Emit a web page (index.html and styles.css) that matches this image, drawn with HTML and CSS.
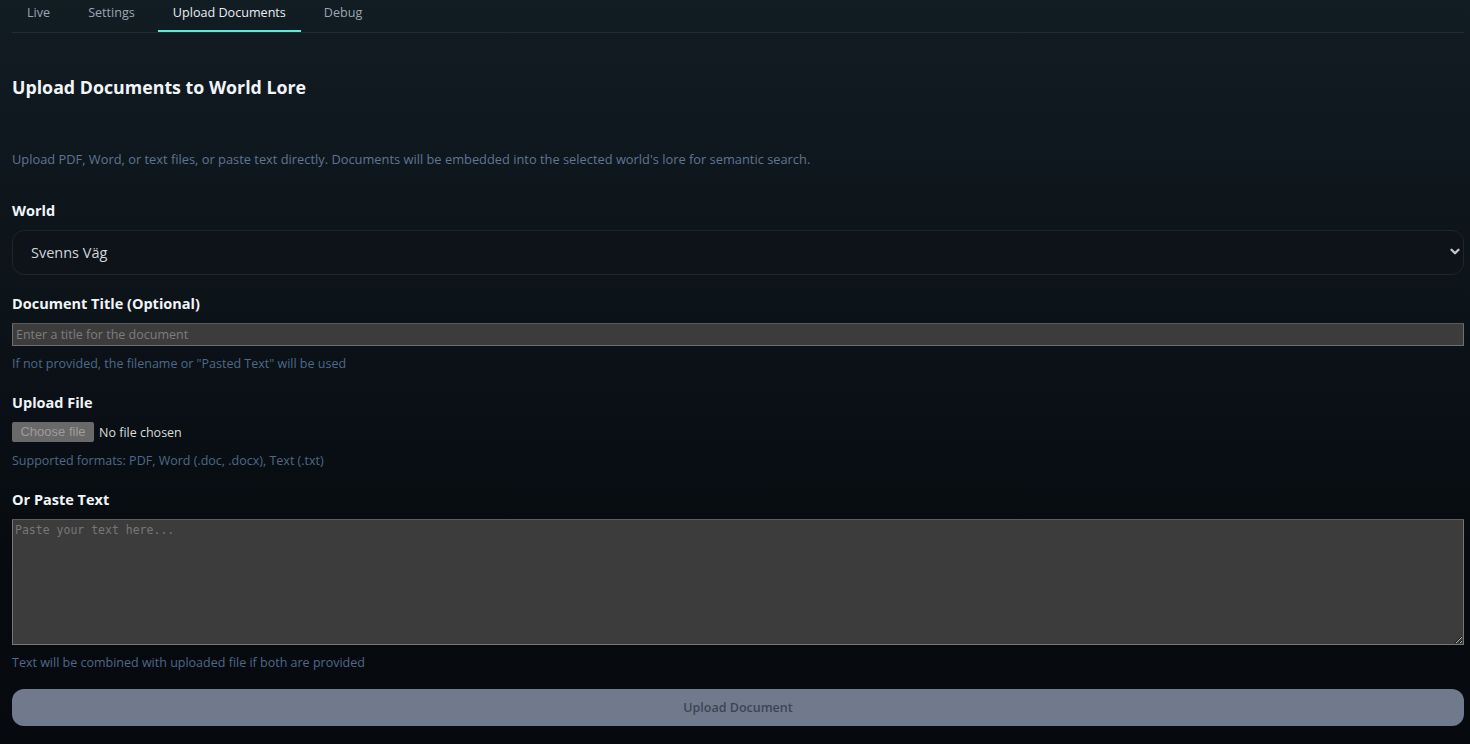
FILE: index.html
```html
<!DOCTYPE html>
<html lang="en">
<head>
<meta charset="utf-8">
<title>Upload Documents</title>
<link rel="stylesheet" href="styles.css">
</head>
<body>
<div class="page">
  <nav class="tabs">
    <span class="tab">Live</span>
    <span class="tab">Settings</span>
    <span class="tab active">Upload Documents</span>
    <span class="tab">Debug</span>
  </nav>

  <h2 class="title">Upload Documents to World Lore</h2>
  <p class="desc">Upload PDF, Word, or text files, or paste text directly. Documents will be embedded into the selected world's lore for semantic search.</p>

  <div class="group first">
    <label class="label">World</label>
    <div class="select-wrap">
      <select class="select"><option>Svenns Väg</option></select>
      <svg class="chev" width="10" height="8" viewBox="0 0 10 8"><path d="M1.5 1.8 L5 5.3 L8.5 1.8" fill="none" stroke="#c3c7cf" stroke-width="2.3" stroke-linecap="round" stroke-linejoin="round"/></svg>
    </div>
  </div>

  <div class="group second">
    <label class="label">Document Title (Optional)</label>
    <input class="text-input" type="text" placeholder="Enter a title for the document">
    <p class="hint">If not provided, the filename or "Pasted Text" will be used</p>
  </div>

  <div class="group">
    <label class="label">Upload File</label>
    <div class="file">
      <span class="file-btn">Choose file</span>
      <span class="file-name">No file chosen</span>
    </div>
    <p class="hint">Supported formats: PDF, Word (.doc, .docx), Text (.txt)</p>
  </div>

  <div class="group">
    <label class="label">Or Paste Text</label>
    <textarea class="textarea" placeholder="Paste your text here..."></textarea>
    <p class="hint">Text will be combined with uploaded file if both are provided</p>
  </div>

  <button class="submit" disabled>Upload Document</button>
</div>
</body>
</html>
```

FILE: styles.css
```css
html, body {
  margin: 0;
  padding: 0;
  height: 100%;
}
body {
  background: linear-gradient(180deg, #121c23 0%, #0c1319 40%, #070b10 75%, #060a0f 100%);
  font-family: "Open Sans", "Noto Sans", sans-serif;
  color: #e6edf3;
  overflow: hidden;
}
.page {
  padding: 0 6px 0 12px;
  display: flex;
  flex-direction: column;
}
.tabs {
  display: flex;
  gap: 8px;
  border-bottom: 1px solid #222c35;
  height: 33px;
  box-sizing: border-box;
}
.tab {
  font-size: 12.6px;
  line-height: 20px;
  padding: 3px 15px 7px;
  color: #9aa6b2;
  border-bottom: 2px solid transparent;
  height: 20px;
}
.tab.active {
  color: #e8eef4;
  border-bottom-color: #5eead4;
}
.title {
  margin: 42px 0 0;
  font-size: 17.8px;
  line-height: 24px;
  font-weight: 700;
  color: #f1f5f9;
}
.desc {
  margin: 51px 0 0;
  font-size: 12.85px;
  line-height: 18px;
  color: #5f7590;
}
.group {
  display: flex;
  flex-direction: column;
  margin-top: 19px;
}
.group.first {
  margin-top: 32px;
}
.group.second {
  margin-top: 18px;
}
.label {
  font-size: 14.5px;
  line-height: 20px;
  padding-top: 1px;
  font-weight: 700;
  color: #f1f5f9;
  margin-bottom: 9px;
}
.select-wrap {
  position: relative;
}
.select {
  appearance: none;
  -webkit-appearance: none;
  width: 100%;
  height: 45px;
  box-sizing: border-box;
  border: 1px solid #1e252e;
  border-radius: 12px;
  background: #0e131a;
  color: #d1d5db;
  font-family: inherit;
  font-size: 14.5px;
  padding: 0 18px;
  margin: 0;
}
.chev {
  position: absolute;
  right: 4px;
  top: 18px;
}
.text-input {
  height: 23px;
  box-sizing: border-box;
  margin: 0;
  border: 1px solid #6e6e6e;
  border-top-color: #5a5a5a;
  background: #3c3c3c;
  color: #ddd;
  font-family: inherit;
  font-size: 12.5px;
  padding: 0 3px;
  border-radius: 1px;
}
.text-input::placeholder {
  color: #7c7c7c;
}
.hint {
  margin: 8px 0 0;
  padding-top: 1px;
  font-size: 12.5px;
  line-height: 18px;
  color: #4f6888;
}
.file {
  display: flex;
  align-items: center;
  gap: 5px;
  height: 20px;
}
.file-btn {
  width: 82px;
  height: 20px;
  box-sizing: border-box;
  background: #696969;
  color: #9c9c9c;
  border-radius: 2px;
  font-family: "Liberation Sans", Arial, sans-serif;
  font-size: 13px;
  line-height: 20px;
  text-align: center;
}
.file-name {
  font-family: "Open Sans", sans-serif;
  font-size: 12.5px;
  color: #dcdcdc;
}
.file + .hint {
  margin-top: 9px;
}
.textarea {
  height: 126px;
  box-sizing: border-box;
  margin: 0;
  background: #3c3c3c;
  border: 1px solid #777;
  border-top-color: #5e5e5e;
  color: #ddd;
  font-family: "DejaVu Sans Mono", "Liberation Mono", monospace;
  font-size: 11.5px;
  padding: 3px 2px;
  border-radius: 1px;
  resize: vertical;
}
.textarea::placeholder {
  color: #777;
}
.submit {
  margin-top: 17px;
  height: 37px;
  border: none;
  border-radius: 12px;
  background: #707a8c;
  color: #3d4555;
  font-family: inherit;
  font-size: 12.5px;
  font-weight: 600;
  cursor: not-allowed;
}
```
